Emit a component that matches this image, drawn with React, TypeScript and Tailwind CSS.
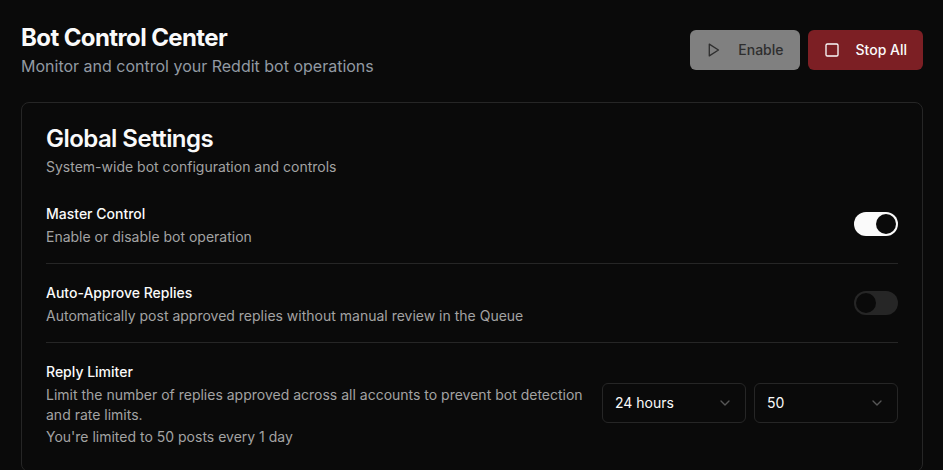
import { ChevronDown, Square } from "lucide-react";

function Toggle({ on }: { on: boolean }) {
  return (
    <div
      className={`mb-1 flex h-6 w-11 shrink-0 items-center rounded-full border-2 border-transparent ${
        on ? "justify-end bg-[#fafafa]" : "justify-start bg-[#262626]"
      }`}
    >
      <span className="block h-5 w-5 rounded-full bg-[#0a0a0a]" />
    </div>
  );
}

function Select({ value }: { value: string }) {
  return (
    <div className="flex h-10 w-[144px] items-center justify-between rounded-md border border-[#262626] px-3 text-sm text-[#fafafa]">
      <span>{value}</span>
      <ChevronDown size={16} className="text-[#a3a3a3] opacity-50" />
    </div>
  );
}

export default function App() {
  return (
    <div className="h-[470px] overflow-hidden bg-[#0a0a0a] pl-[21px] pr-[20px] font-['Inter',sans-serif] text-[#fafafa]">
      <header className="flex h-[102px] items-start justify-between pt-[22px]">
        <div>
          <h1 className="text-2xl font-bold leading-8 tracking-[-0.6px]">Bot Control Center</h1>
          <p className="text-base leading-6 text-[#929aa3]">Monitor and control your Reddit bot operations</p>
        </div>
        <div className="mt-[8px] flex gap-2">
          <button className="flex h-10 w-[110px] items-center gap-4 rounded-md bg-[#808080] px-4 text-sm font-medium text-[#2e2e2e]">
            <svg width="16" height="16" viewBox="0 0 24 24" fill="none" stroke="currentColor" strokeWidth="2" strokeLinecap="round" strokeLinejoin="round">
              <polygon points="5 3 19 12 5 21 5 3" />
            </svg>
            <span className="ml-[1px]">Enable</span>
          </button>
          <button className="flex h-10 items-center gap-4 whitespace-nowrap rounded-md bg-[#7c1f24] px-4 text-sm font-medium text-[#fafafa]">
            <Square size={16} />
            <span>Stop All</span>
          </button>
        </div>
      </header>
      <section className="rounded-lg border border-[#262626] bg-[#0a0a0a] pb-6">
        <div className="px-6 pt-6">
          <h2 className="text-2xl font-semibold leading-6 tracking-[-0.55px]">Global Settings</h2>
          <p className="mt-[6px] text-sm leading-5 text-[#a3a3a3]">System-wide bot configuration and controls</p>
        </div>
        <div className="px-6 pt-[27px]">
          <div className="flex items-center justify-between border-b border-[#262626] pb-4">
            <div>
              <div className="text-sm font-medium leading-5">Master Control</div>
              <div className="mt-[3px] text-sm leading-5 text-[#a3a3a3]">Enable or disable bot operation</div>
            </div>
            <Toggle on />
          </div>
          <div className="flex items-center justify-between border-b border-[#262626] pt-[19px] pb-4">
            <div>
              <div className="text-sm font-medium leading-5">Auto-Approve Replies</div>
              <div className="mt-[3px] text-sm leading-5 text-[#a3a3a3]">Automatically post approved replies without manual review in the Queue</div>
            </div>
            <Toggle on={false} />
          </div>
          <div className="flex items-center justify-between gap-4 pt-[19px]">
            <div className="w-[540px]">
              <div className="text-sm font-medium leading-5">Reply Limiter</div>
              <div className="mt-[3px] text-sm leading-5 text-[#a3a3a3]">
                Limit the number of replies approved across all accounts to prevent bot detection and rate limits.
              </div>
              <div className="mt-[2px] text-sm leading-5 text-[#a3a3a3]">You're limited to 50 posts every 1 day</div>
            </div>
            <div className="mb-1 flex gap-2">
              <Select value="24 hours" />
              <Select value="50" />
            </div>
          </div>
        </div>
      </section>
    </div>
  );
}
